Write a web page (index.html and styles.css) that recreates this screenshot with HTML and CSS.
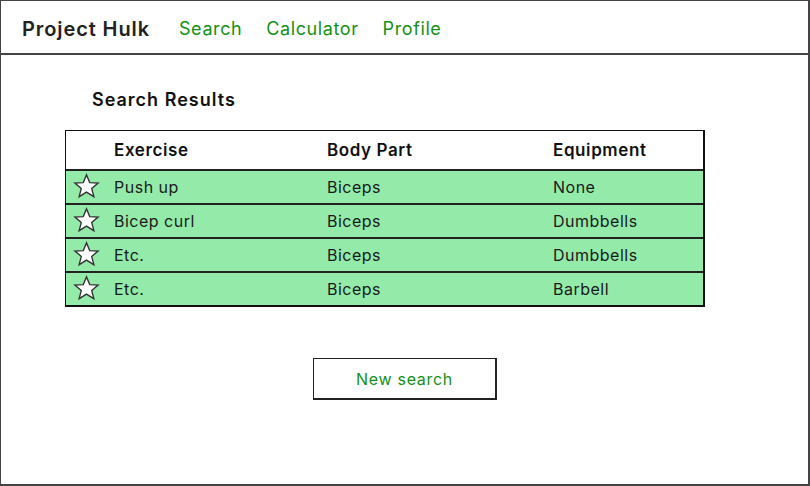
FILE: index.html
```html
<!DOCTYPE html>
<html>
<head>
<meta charset="utf-8">
<link rel="stylesheet" href="styles.css">
</head>
<body>
<div class="frame">
  <header class="topbar">
    <div class="brand">Project Hulk</div>
    <nav class="nav">
      <a class="nav-link">Search</a>
      <a class="nav-link">Calculator</a>
      <a class="nav-link">Profile</a>
    </nav>
  </header>
  <main class="content">
    <h2 class="title">Search Results</h2>
    <div class="table">
      <div class="row head">
        <div class="cell star-cell"></div>
        <div class="cell c1">Exercise</div>
        <div class="cell c2">Body Part</div>
        <div class="cell c3">Equipment</div>
      </div>
      <div class="row">
        <div class="cell star-cell"><svg class="star" viewBox="0 0 26 26"><path d="M13 1.8 L16.1 9.2 L24.2 9.6 L18 14.8 L20.1 22.8 L13 18.4 L5.9 22.8 L8 14.8 L1.8 9.6 L9.9 9.2 Z"/></svg></div>
        <div class="cell c1">Push up</div>
        <div class="cell c2">Biceps</div>
        <div class="cell c3">None</div>
      </div>
      <div class="row">
        <div class="cell star-cell"><svg class="star" viewBox="0 0 26 26"><path d="M13 1.8 L16.1 9.2 L24.2 9.6 L18 14.8 L20.1 22.8 L13 18.4 L5.9 22.8 L8 14.8 L1.8 9.6 L9.9 9.2 Z"/></svg></div>
        <div class="cell c1">Bicep curl</div>
        <div class="cell c2">Biceps</div>
        <div class="cell c3">Dumbbells</div>
      </div>
      <div class="row">
        <div class="cell star-cell"><svg class="star" viewBox="0 0 26 26"><path d="M13 1.8 L16.1 9.2 L24.2 9.6 L18 14.8 L20.1 22.8 L13 18.4 L5.9 22.8 L8 14.8 L1.8 9.6 L9.9 9.2 Z"/></svg></div>
        <div class="cell c1">Etc.</div>
        <div class="cell c2">Biceps</div>
        <div class="cell c3">Dumbbells</div>
      </div>
      <div class="row last">
        <div class="cell star-cell"><svg class="star" viewBox="0 0 26 26"><path d="M13 1.8 L16.1 9.2 L24.2 9.6 L18 14.8 L20.1 22.8 L13 18.4 L5.9 22.8 L8 14.8 L1.8 9.6 L9.9 9.2 Z"/></svg></div>
        <div class="cell c1">Etc.</div>
        <div class="cell c2">Biceps</div>
        <div class="cell c3">Barbell</div>
      </div>
    </div>
    <div class="actions">
      <button class="btn">New search</button>
    </div>
  </main>
</div>
</body>
</html>
```
FILE: styles.css
```css
* { box-sizing: border-box; }
html, body { margin: 0; padding: 0; background: #fff; }
body {
  font-family: "Inter", "Noto Sans", sans-serif;
  color: #1a1a1a;
}
.frame {
  width: 810px;
  height: 486px;
  border-top: 1px solid #444;
  border-left: 1px solid #444;
  border-right: 2px solid #444;
  border-bottom: 2px solid #444;
  display: flex;
  flex-direction: column;
}
.topbar {
  height: 54px;
  border-bottom: 2px solid #444;
  display: flex;
  align-items: center;
  padding: 3px 0 0 21px;
}
.brand {
  font-size: 20px;
  font-weight: 600;
  letter-spacing: 0.9px;
  color: #222;
  margin-right: 29px;
}
.nav { display: flex; gap: 24px; }
.nav-link {
  font-size: 18px;
  letter-spacing: 0.6px;
  color: #159015;
  text-decoration: none;
}
.content {
  padding: 34px 0 0 64px;
}
.title {
  margin: 0 0 19px 27px;
  font-size: 18px;
  letter-spacing: 1px;
  font-weight: 600;
  color: #111;
  line-height: 22px;
}
.table {
  width: 640px;
  border: 1px solid #111;
  border-bottom-width: 2px;
  border-right-width: 2px;
}
.row {
  display: flex;
  align-items: center;
  height: 34px;
  padding-bottom: 1px;
  background: #93eaa9;
  border-top: 2px solid #222;
  font-size: 16px;
  letter-spacing: 0.5px;
}
.row.head {
  height: 38px;
  background: #fff;
  border-top: none;
  font-size: 17px;
  letter-spacing: 0.6px;
  font-weight: 600;
  color: #111;
}
.cell { white-space: nowrap; }
.star-cell {
  width: 48px;
  display: flex;
  align-items: center;
  padding-left: 7px;
}
.star { width: 27px; height: 27px; }
.star path {
  fill: #fff;
  stroke: #333;
  stroke-width: 1.3;
  stroke-linejoin: miter;
}
.c1 { width: 213px; }
.c2 { width: 226px; }
.c3 { flex: 1; }
.actions {
  display: flex;
  padding: 51px 0 0 248px;
}
.btn {
  width: 184px;
  height: 42px;
  border: 1px solid #222;
  border-right-width: 2px;
  border-bottom-width: 2px;
  background: #fff;
  font-family: inherit;
  font-size: 16px;
  letter-spacing: 0.7px;
  color: #159015;
  padding: 0;
}
```
